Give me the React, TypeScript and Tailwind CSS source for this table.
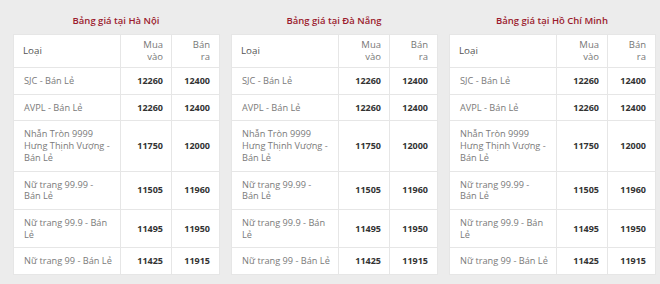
import React from "react";

const rows: [string, string, string][] = [
  ["SJC - Bán Lẻ", "12260", "12400"],
  ["AVPL - Bán Lẻ", "12260", "12400"],
  ["Nhẫn Tròn 9999 Hưng Thịnh Vượng - Bán Lẻ", "11750", "12000"],
  ["Nữ trang 99.99 - Bán Lẻ", "11505", "11960"],
  ["Nữ trang 99.9 - Bán Lẻ", "11495", "11950"],
  ["Nữ trang 99 - Bán Lẻ", "11425", "11915"],
];

const cities = ["Hà Nội", "Đà Nẵng", "Hồ Chí Minh"];

function PriceTable({ city }: { city: string }) {
  return (
    <div className="w-[206px] flex flex-col">
      <div className="h-[34px] flex items-center justify-center pt-[8px] text-[9.5px] font-semibold text-[#9b1b2e]">
        Bảng giá tại {city}
      </div>
      <table className="w-full border-collapse bg-white table-fixed text-[9.2px] leading-[11.7px]">
        <colgroup>
          <col className="w-[107px]" />
          <col className="w-[51px]" />
          <col className="w-[48px]" />
        </colgroup>
        <thead>
          <tr className="h-[33px]">
            <th className="border border-[#e6e6e6] px-[9px] text-left font-normal text-[#555] text-[9.8px] align-middle">
              Loại
            </th>
            <th className="border border-[#e6e6e6] px-[8px] text-right font-normal text-[#777] text-[9.5px] align-middle leading-[12.3px]">
              Mua
              <br />
              vào
            </th>
            <th className="border border-[#e6e6e6] px-[9px] text-right font-normal text-[#777] text-[9.5px] align-middle leading-[12.3px]">
              Bán
              <br />
              ra
            </th>
          </tr>
        </thead>
        <tbody>
          {rows.map((r, i) => (
            <tr key={i}>
              <td className="border border-[#e6e6e6] pl-[10px] pr-[8px] py-[7px] text-[#7a7a7a] align-middle">
                {r[0]}
              </td>
              <td className="border border-[#e6e6e6] px-[8px] py-[7px] text-right font-bold text-[#333] text-[9px] align-middle">
                {r[1]}
              </td>
              <td className="border border-[#e6e6e6] px-[9px] py-[7px] text-right font-bold text-[#333] text-[9px] align-middle">
                {r[2]}
              </td>
            </tr>
          ))}
        </tbody>
      </table>
    </div>
  );
}

export default function App() {
  return (
    <div
      className="w-[660px] h-[284px] bg-[#ececec] flex gap-[12px] pl-[13px] overflow-hidden"
      style={{ fontFamily: '"Open Sans", "Noto Sans", sans-serif' }}
    >
      {cities.map((c) => (
        <PriceTable key={c} city={c} />
      ))}
    </div>
  );
}
